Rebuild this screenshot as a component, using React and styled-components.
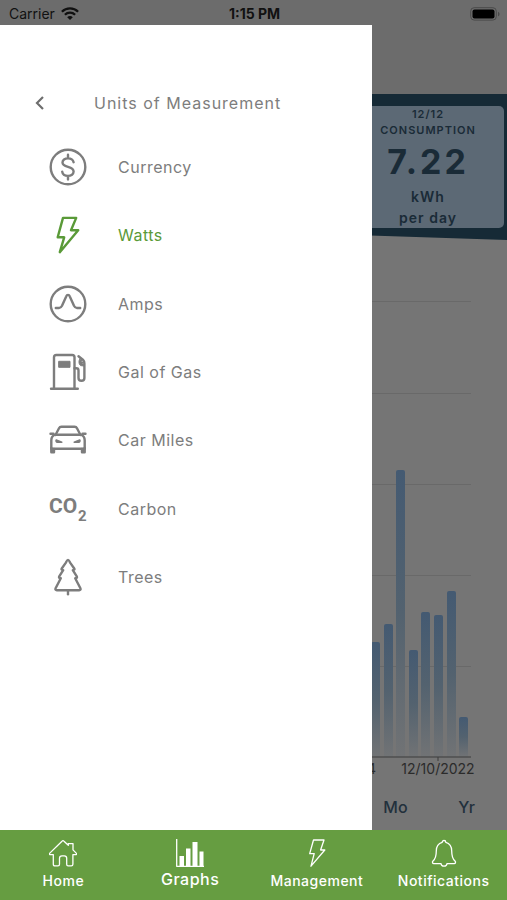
import React from 'react'
import styled, { createGlobalStyle } from 'styled-components'

const units = [
  { name: 'Currency', Icon: CurrencyIcon },
  { name: 'Watts', Icon: BoltIcon, active: true },
  { name: 'Amps', Icon: AmpsIcon },
  { name: 'Gal of Gas', Icon: GasIcon },
  { name: 'Car Miles', Icon: CarIcon },
  { name: 'Carbon', Icon: CarbonIcon },
  { name: 'Trees', Icon: TreeIcon },
]

const tabs = [
  { name: 'Home', Icon: HomeIcon },
  { name: 'Graphs', Icon: GraphsIcon, active: true },
  { name: 'Management', Icon: NavBoltIcon },
  { name: 'Notifications', Icon: BellIcon },
]

const gridLines = [61, 153, 244, 335, 426]

const bars = [
  { x: 371, top: 402 },
  { x: 384, top: 384 },
  { x: 396, top: 230 },
  { x: 409, top: 410 },
  { x: 421, top: 372 },
  { x: 434, top: 375 },
  { x: 447, top: 351 },
  { x: 459, top: 477 },
]

function App() {
  return (
    <Screen>
      <GlobalStyle />
      <StatusBar>
        <Carrier>
          Carrier
          <WifiIcon />
        </Carrier>
        <Time>1:15 PM</Time>
        <Battery>
          <BatteryIcon />
        </Battery>
      </StatusBar>

      <Main>
        <TopSpace />
        <Banner>
          <Card>
            <CardLabel>12/12<br />CONSUMPTION</CardLabel>
            <CardValue>7.22</CardValue>
            <CardUnit>kWh<br />per day</CardUnit>
          </Card>
        </Banner>
        <Chart />
        <Ranges>
          <RangeBtn type="button">Mo</RangeBtn>
          <RangeBtn type="button">Yr</RangeBtn>
        </Ranges>

        <Drawer>
          <DrawerHeader>
            <BackBtn type="button" aria-label="Back">
              <BackIcon />
            </BackBtn>
            <Title>Units of Measurement</Title>
          </DrawerHeader>
          <UnitList>
            {units.map(({ name, Icon, active }) => (
              <UnitItem key={name}>
                <UnitBtn type="button" $active={active}>
                  <Icon />
                  {name}
                </UnitBtn>
              </UnitItem>
            ))}
          </UnitList>
        </Drawer>
      </Main>

      <NavBar>
        {tabs.map(({ name, Icon, active }) => (
          <NavLink key={name} href={'#' + name.toLowerCase()} $active={active}>
            <Icon />
            {name}
          </NavLink>
        ))}
      </NavBar>
    </Screen>
  )
}

export default App

function Chart() {
  return (
    <ChartSvg viewBox="0 0 507 545" preserveAspectRatio="xMaxYMin meet">
      <defs>
        <linearGradient id="bar" x1="0" y1="0" x2="0" y2="1">
          <stop offset="0" stopColor="#445a72" />
          <stop offset="0.5" stopColor="#53626f" />
          <stop offset="1" stopColor="#717375" />
        </linearGradient>
      </defs>
      {gridLines.map((y) => (
        <rect key={y} x="36" y={y} width="435" height="1" fill="#696969" />
      ))}
      {bars.map(({ x, top }) => (
        <path
          key={x}
          d={`M${x} 517V${top + 2}q0-2 2-2h5q2 0 2 2V517z`}
          fill="url(#bar)"
        />
      ))}
      <path d="M36 517H471M438 517v4" stroke="#3c3c3c" fill="none" />
      <AxisText x="376" y="534" textAnchor="end">4</AxisText>
      <AxisText x="438" y="534" textAnchor="middle">12/10/2022</AxisText>
    </ChartSvg>
  )
}

function WifiIcon() {
  return (
    <svg width="18" height="13" viewBox="0 0 18 13" fill="none" stroke="currentColor" strokeWidth="2.3">
      <path d="M0.9 4.7C5.4 0.3 12.6 0.3 17.1 4.7" />
      <path d="M3.9 7.8C6.7 5 11.3 5 14.1 7.8" />
      <path d="M9 13L6.2 10.2C7.8 8.7 10.2 8.7 11.8 10.2z" fill="currentColor" stroke="none" />
    </svg>
  )
}

function BatteryIcon() {
  return (
    <svg width="30" height="14" viewBox="0 0 30 14">
      <rect x="0.7" y="0.7" width="25.6" height="12.4" rx="3.5" fill="none" stroke="#4a4a4a" />
      <rect x="2.5" y="2.5" width="22" height="9" rx="2" fill="#000" />
      <path d="M28 4.7c2 .8 2 3.8 0 4.6z" fill="#4a4a4a" />
    </svg>
  )
}

function BackIcon() {
  return (
    <svg width="12" height="16" viewBox="0 0 12 16" fill="none" stroke="currentColor" strokeWidth="2.2">
      <path d="M9 2L3 8l6 6" />
    </svg>
  )
}

function CurrencyIcon() {
  return (
    <UnitSvg viewBox="0 0 38 38">
      <circle cx="19" cy="19" r="17.3" />
      <path d="M24.6 14.2C24 11.6 22 10.4 19 10.4C15.8 10.4 13.5 12 13.5 14.5C13.5 17.2 15.8 18 19 18.9C22.2 19.8 24.6 20.8 24.6 23.6C24.6 26.2 22.2 27.9 19 27.9C15.7 27.9 13.6 26.3 13.2 23.6M19 6.8V10.4M19 27.9V31.4" />
    </UnitSvg>
  )
}

function BoltIcon() {
  return (
    <UnitSvg viewBox="0 0 38 38">
      <path d="M14 1.9H27.2L22 14.2H29.2L10.8 36.2L15.2 21.3H8.7z" />
    </UnitSvg>
  )
}

function AmpsIcon() {
  return (
    <UnitSvg viewBox="0 0 38 38">
      <circle cx="19" cy="19" r="17.3" />
      <path d="M6.8 23H10C11.5 23 12.2 22.4 13 20.8L17.2 11.4C18 9.3 20 9.3 20.8 11.4L25 20.8C25.8 22.4 26.5 23 28 23H31.2" />
    </UnitSvg>
  )
}

function GasIcon() {
  return (
    <UnitSvg viewBox="0 0 38 38">
      <path d="M5 35.5V4.3C5 2.9 5.9 2 7.3 2H23.2C24.6 2 25.5 2.9 25.5 4.3V35.5M2 35.8H28.8" />
      <path d="M25.5 15.3H27.3C28.8 15.3 29.5 16.1 29.5 17.5V25C29.5 28.7 35.4 28.7 35.4 25V10.5C35.4 8.8 34.9 7.7 33.9 6.7L29.5 3.3" />
      <path d="M31 5.500C29.300 8 29.800 11.200 31.600 12.600L35 13z" fill="currentColor" strokeWidth="1" />
      <rect x="10" y="8.3" width="11" height="6" fill="currentColor" strokeWidth="1" />
    </UnitSvg>
  )
}

function CarIcon() {
  return (
    <UnitSvg viewBox="0 0 38 38">
      <path d="M6.5 14L10 7.2C10.5 6.2 11.2 5.8 12.4 5.8H25.6C26.8 5.8 27.5 6.2 28 7.2L31.5 14" />
      <path d="M1.5 12.8H4.5M33.5 12.8H36.5M6.5 13.7H31.5M6.5 13.7C3.3 14.5 2.3 16.5 2.3 19.6V27.8H35.7V19.6C35.7 16.5 34.7 14.5 31.5 13.7" />
      <path d="M2.3 27V31.3H5V28M35.7 27V31.3H33V28" fill="currentColor" />
      <path d="M7.2 19L12.8 21.3H8.3C7.2 21.3 6.8 20 7.2 19zM30.8 19L25.2 21.3H29.7C30.8 21.3 31.2 20 30.8 19z" fill="currentColor" strokeWidth="1.6" />
    </UnitSvg>
  )
}

function CarbonIcon() {
  return (
    <UnitSvg viewBox="0 0 38 38">
      <IconText x="0" y="23" fontSize="21">CO</IconText>
      <IconText x="29" y="31" fontSize="15">2</IconText>
    </UnitSvg>
  )
}

function TreeIcon() {
  return (
    <UnitSvg viewBox="0 0 38 38">
      <path d="M19 1.9C18 1.9 17.6 3.3 16.9 4.6L12.6 10.7C12.2 11.5 12.8 11.9 14.2 12.2L10.1 18.7C9.7 19.6 10.3 20 11.8 20.3L6.6 30.2C6 31.5 6.6 32.2 7.8 32.2H30.2C31.4 32.2 32 31.5 31.4 30.2L26.2 20.3C27.7 20 28.3 19.6 27.9 18.7L23.8 12.2C25.2 11.9 25.8 11.5 25.4 10.7L21.1 4.6C20.4 3.3 20 1.9 19 1.9z" />
      <path d="M19 32.5V36.3" />
    </UnitSvg>
  )
}

function HomeIcon() {
  return (
    <NavSvg viewBox="0 0 28 28">
      <path d="M4.3 15.6H1.4C.4 15.6 .1 14.8 .8 14.1L13 2.2C13.6 1.5 14.4 1.5 15 2.2L19.3 6.3V4.6H24V10.9L27.2 14.1C27.9 14.8 27.6 15.6 26.6 15.6H23.9V25.2C23.9 26.3 23.4 26.9 22.3 26.9H19.1C18.2 26.9 17.7 26.3 17.7 25.2V19.3C17.7 17.8 16.7 16.8 15.3 16.8H13C11.5 16.8 10.5 17.8 10.5 19.3V25.2C10.5 26.3 9.9 26.9 8.9 26.9H5.9C4.8 26.9 4.3 26.3 4.3 25.2z" />
    </NavSvg>
  )
}

function GraphsIcon() {
  return (
    <NavSvg viewBox="0 0 28 28">
      <path d="M.7 0V27.3H28" />
      <path d="M3.5 17H8V27H3.5zM10 9.5H14.5V27H10zM16.5 3H21.5V27H16.5zM23.5 12.5H27.5V27H23.5z" fill="currentColor" stroke="none" />
    </NavSvg>
  )
}

function NavBoltIcon() {
  return (
    <NavSvg viewBox="0 0 28 28">
      <path d="M10.5 1H21L17.6 11H21.8L8 27.2L11.2 14.7H6.7z" />
    </NavSvg>
  )
}

function BellIcon() {
  return (
    <NavSvg viewBox="0 0 28 28">
      <path d="M12.2 3.3C12.2 .9 15.8 .9 15.8 3.3C19.7 4.5 21.7 7.5 21.7 11.8C21.7 17.3 22.5 20 25 22.1C26 23 25.5 24.6 24.2 24.6H17C16.7 28 11.3 28 11 24.6H3.8C2.5 24.6 2 23 3 22.1C5.5 20 6.3 17.3 6.3 11.8C6.3 7.5 8.3 4.5 12.2 3.3z" />
    </NavSvg>
  )
}

const GlobalStyle = createGlobalStyle`
    * {
        box-sizing: border-box;
    }

    body {
        margin: 0;
        font-family: Inter, sans-serif;
    }

    button {
        padding: 0;
        border: none;
        background: none;
        font-family: inherit;
        cursor: pointer;
    }
`

const Screen = styled.div`
    display: flex;
    flex-direction: column;
    min-height: 100vh;
    background-color: #757575;
`

const StatusBar = styled.header`
    display: grid;
    grid-template-columns: 1fr auto 1fr;
    align-items: center;
    height: 25px;
    padding: 2px 7px 0 9px;
    background-color: #6c6c6c;
    color: #111;
    font-size: 14px;
`

const Carrier = styled.div`
    display: flex;
    align-items: center;
    gap: 6px;
`

const Time = styled.div`
    font-size: 14px;
    font-weight: 700;
`

const Battery = styled.div`
    display: flex;
    justify-content: flex-end;
`

const Main = styled.main`
    position: relative;
    display: flex;
    flex-direction: column;
    flex: 1;
`

const TopSpace = styled.div`
    height: 69px;
    background-color: #6c6c6c;
`

const Banner = styled.section`
    display: flex;
    justify-content: flex-end;
    height: 146px;
    padding: 12px 3px;
    background-color: #162a36;
    clip-path: polygon(0 0, 100% 0, 100% 100%, 73% 97%, 0 95%);
`

const Card = styled.div`
    display: flex;
    flex-direction: column;
    align-items: center;
    width: 152px;
    border-radius: 5px;
    background-color: #5c6975;
    color: #1a2b37;
    text-align: center;
`

const CardLabel = styled.div`
    font-size: 11px;
    font-weight: 600;
    line-height: 16px;
    letter-spacing: 1px;
`

const CardValue = styled.div`
    font-size: 34px;
    font-weight: 700;
    line-height: 48px;
    letter-spacing: 3px;
`

const CardUnit = styled.div`
    font-size: 14px;
    font-weight: 600;
    line-height: 21px;
    letter-spacing: 1px;
`

const ChartSvg = styled.svg`
    display: block;
    width: 100%;
    height: 545px;
`

const AxisText = styled.text`
    fill: #2b2b2b;
    font-size: 14px;
`

const Ranges = styled.div`
    display: flex;
    justify-content: flex-end;
    padding-right: 5px;
`

const RangeBtn = styled.button`
    width: 71px;
    height: 43px;
    color: #22303c;
    font-size: 16px;
    font-weight: 500;
`

const Drawer = styled.aside`
    position: absolute;
    top: 0;
    bottom: 0;
    left: 0;
    width: 73.4%;
    padding-top: 48px;
    background-color: #fff;
`

const DrawerHeader = styled.div`
    display: flex;
    align-items: center;
    height: 60px;
    padding-left: 30px;
    color: #7d7d7d;
`

const BackBtn = styled.button`
    display: flex;
    justify-content: center;
    width: 20px;
    margin-right: 44px;
    color: #6e6e6e;
`

const Title = styled.h1`
    margin: 0;
    font-size: 16px;
    font-weight: 400;
    letter-spacing: 1px;
`

const UnitList = styled.ul`
    display: grid;
    grid-auto-rows: 1fr;
    height: 478px;
    margin: 0;
    padding: 0;
    list-style: none;
`

const UnitItem = styled.li`
    display: flex;
`

const UnitBtn = styled.button`
    display: flex;
    align-items: center;
    gap: 31px;
    width: 100%;
    padding-left: 49px;
    color: ${({ $active }) => ($active ? '#5a9a38' : '#7d7d7d')};
    font-size: 16px;
    letter-spacing: 0.5px;
`

const UnitSvg = styled.svg`
    width: 38px;
    height: 38px;
    fill: none;
    stroke: currentColor;
    stroke-width: 2.4;
    stroke-linecap: round;
    stroke-linejoin: round;
`

const IconText = styled.text`
    fill: currentColor;
    stroke: none;
    font-family: Roboto, sans-serif;
    font-weight: 700;
    letter-spacing: 0;
`

const NavBar = styled.nav`
    display: grid;
    grid-template-columns: repeat(4, 1fr);
    height: 70px;
    background-color: #669d41;
`

const NavLink = styled.a`
    display: flex;
    flex-direction: column;
    align-items: center;
    gap: ${({ $active }) => ($active ? '1px' : '3px')};
    padding-top: 9px;
    color: #fff;
    font-size: ${({ $active }) => ($active ? '16px' : '14px')};
    font-weight: 500;
    line-height: 22px;
    letter-spacing: 0.5px;
    text-decoration: none;
`

const NavSvg = styled.svg`
    width: 28px;
    height: 28px;
    fill: none;
    stroke: currentColor;
    stroke-width: 1.3;
    stroke-linejoin: round;
`
